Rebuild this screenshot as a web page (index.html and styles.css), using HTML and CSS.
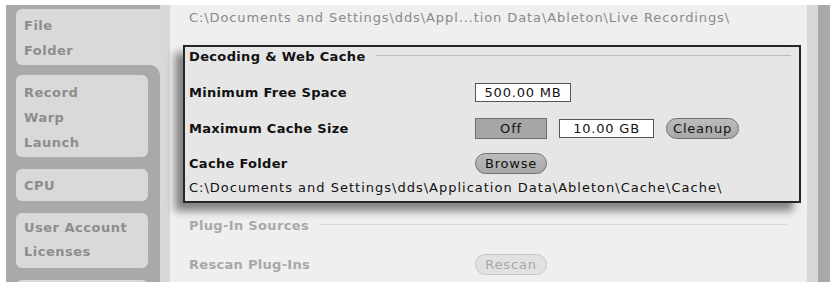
FILE: index.html
```html
<!DOCTYPE html>
<html>
<head>
<meta charset="utf-8">
<link rel="stylesheet" href="styles.css">
</head>
<body>
<div class="frame">
  <div class="sidebar">
    <div class="tab active"><span>File</span><span>Folder</span></div>
    <div class="tab t2"><span>Record</span><span>Warp</span><span>Launch</span></div>
    <div class="tab t3"><span>CPU</span></div>
    <div class="tab t4"><span>User Account</span><span>Licenses</span></div>
    <div class="tab t5"></div>
  </div>
  <div class="main">
    <div class="inner">
      <div class="toppath">C:\Documents and Settings\dds\Appl...tion Data\Ableton\Live Recordings\</div>
      <div class="box">
        <div class="heading"><span>Decoding &amp; Web Cache</span><i class="rule"></i></div>
        <div class="row r1"><span class="label">Minimum Free Space</span><div class="controls"><span class="field w96">500.00 MB</span></div></div>
        <div class="row r2"><span class="label">Maximum Cache Size</span><div class="controls"><span class="toggle">Off</span><span class="field w95">10.00 GB</span><span class="pill">Cleanup</span></div></div>
        <div class="row r3"><span class="label">Cache Folder</span><div class="controls"><span class="pill wide">Browse</span></div></div>
        <div class="path">C:\Documents and Settings\dds\Application Data\Ableton\Cache\Cache\</div>
      </div>
      <div class="heading dim"><span>Plug-In Sources</span><i class="rule"></i></div>
      <div class="row dim r4"><span class="label">Rescan Plug-Ins</span><div class="controls"><span class="pill wide off">Rescan</span></div></div>
    </div>
  </div>
</div>
</body>
</html>
```
FILE: styles.css
```css
* { box-sizing: border-box; }
body {
  margin: 0;
  background: #fff;
  font-family: "DejaVu Sans", "Liberation Sans", sans-serif;
  font-size: 13px;
  width: 834px;
  height: 287px;
  overflow: hidden;
}
.frame {
  margin: 5px 0 0 6px;
  width: 824px;
  height: 277px;
  background: #a9a9a9;
  display: flex;
  padding-right: 12px;
  overflow: hidden;
}
.sidebar {
  width: 154px;
  flex: none;
  padding: 4px 0 0 10px;
  display: flex;
  flex-direction: column;
}
.tab {
  width: 132px;
  background: #d9d9d9;
  border-radius: 6px;
  display: flex;
  flex-direction: column;
  padding: 4px 0 0 8px;
  color: #8d8d8d;
  font-weight: bold;
  letter-spacing: 0.5px;
  line-height: 25px;
  flex: none;
}
.tab.active {
  width: 144px;
  height: 56px;
  border-radius: 6px 0 0 6px;
  position: relative;
}
.tab.active::after {
  content: "";
  position: absolute;
  right: 0;
  bottom: -10px;
  width: 10px;
  height: 10px;
  background: radial-gradient(circle at 0 100%, #a9a9a9 9.5px, #d8d8d8 10px);
}
.t2 { margin-top: 10px; height: 82px; padding-top: 5px; }
.t3 { margin-top: 12px; height: 32px; padding-top: 4px; }
.t4 { margin-top: 12px; height: 55px; padding-top: 3px; line-height: 24px; }
.t5 { margin-top: 12px; height: 30px; }
.main {
  flex: 1;
  background: #d8d8d8;
  padding: 0 11px 0 10px;
}
.inner {
  height: 100%;
  background: #efefef;
  padding: 5px 6px 0 13px;
}
.toppath {
  color: #8a8a8a;
  line-height: 16px;
  padding-left: 6px;
  letter-spacing: 0.9px;
  white-space: nowrap;
}
.box {
  margin-top: 19px;
  height: 158px;
  border: 2px solid #262626;
  background: #e6e6e6;
  box-shadow: -8px 8px 8px rgba(0, 0, 0, 0.45);
  padding: 0 0 0 4px;
}
.heading {
  display: flex;
  align-items: center;
  height: 18px;
  font-weight: bold;
  letter-spacing: 0.35px;
  color: #111;
}
.heading .rule {
  flex: 1;
  height: 1px;
  background: #bdbdbd;
  margin: 0 8px 2px 10px;
}
.row {
  display: flex;
  align-items: center;
  height: 21px;
  font-weight: bold;
  letter-spacing: 0.3px;
  color: #111;
}
.label { width: 286px; flex: none; }
.controls {
  display: flex;
  align-items: center;
  gap: 12px;
  font-weight: normal;
  letter-spacing: 0.8px;
}
.r1 { margin-top: 17px; }
.r2 { margin-top: 15px; }
.r3 { margin-top: 14px; }
.path {
  margin-top: 6px;
  line-height: 16px;
  color: #111;
  letter-spacing: 1px;
  white-space: nowrap;
}
.field {
  height: 19px;
  background: #fff;
  border: 1px solid #555;
  display: flex;
  align-items: center;
  justify-content: center;
  color: #111;
}
.w96 { width: 96px; }
.w95 { width: 95px; }
.toggle {
  width: 72px;
  height: 21px;
  background: #a6a6a6;
  border: 1px solid #6e6e6e;
  display: flex;
  align-items: center;
  justify-content: center;
  color: #111;
}
.pill {
  height: 21px;
  padding: 0 3px;
  border-radius: 11px;
  background: linear-gradient(#bcbcbc, #a8a8a8);
  border: 1px solid #6f6f6f;
  display: flex;
  align-items: center;
  justify-content: center;
  color: #111;
  width: 73px;
}
.pill.wide { width: 72px; }
.inner > .heading { margin: 13px 0 0 6px; }
.inner > .heading .rule { background: #d9d9d9; margin-right: 14px; }
.dim { color: #a8a8a8; }
.r4 { margin: 20px 0 0 6px; }
.pill.off {
  background: #e1e1e1;
  border-color: #c6c6c6;
  color: #a8a8a8;
}
```
